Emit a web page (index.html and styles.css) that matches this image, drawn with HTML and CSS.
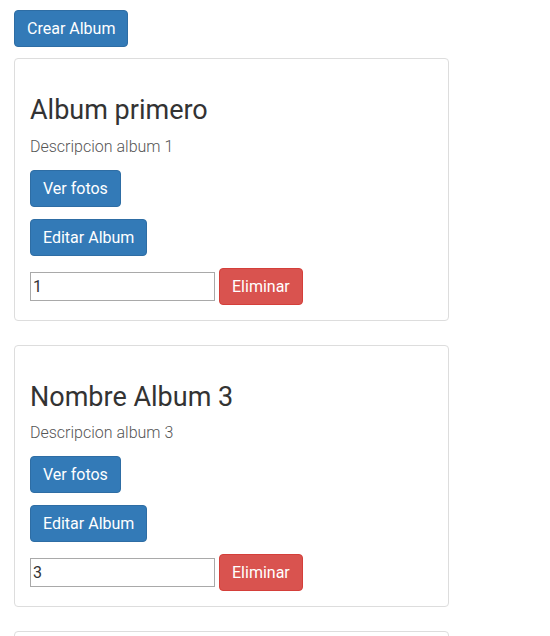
FILE: index.html
```html
<!DOCTYPE html>
<html lang="es">
<head>
<meta charset="utf-8">
<title>Albums</title>
<link rel="stylesheet" href="styles.css">
</head>
<body>
<div class="page">
  <button class="btn btn-primary crear">Crear Album</button>
  <div class="card">
    <h2 class="title">Album primero</h2>
    <p class="desc">Descripcion album 1</p>
    <div class="row"><button class="btn btn-primary">Ver fotos</button></div>
    <div class="row"><button class="btn btn-primary">Editar Album</button></div>
    <div class="row del"><input class="idbox" type="text" value="1"><button class="btn btn-danger">Eliminar</button></div>
  </div>
  <div class="card">
    <h2 class="title">Nombre Album 3</h2>
    <p class="desc">Descripcion album 3</p>
    <div class="row"><button class="btn btn-primary">Ver fotos</button></div>
    <div class="row"><button class="btn btn-primary">Editar Album</button></div>
    <div class="row del"><input class="idbox" type="text" value="3"><button class="btn btn-danger">Eliminar</button></div>
  </div>
  <div class="card">
    <h2 class="title">Album</h2>
    <p class="desc">Descripcion album</p>
  </div>
</div>
</body>
</html>
```

FILE: styles.css
```css
html, body {
  margin: 0;
  padding: 0;
  background: #fff;
}
body {
  font-family: Roboto, "Helvetica Neue", Arial, sans-serif;
  font-size: 16px;
  line-height: 1.42857;
  color: #333;
}
.page {
  padding: 10px 14px 0;
  width: 435px;
  display: flex;
  flex-direction: column;
  align-items: flex-start;
}
.btn {
  font-family: inherit;
  font-size: 16px;
  line-height: 23px;
  padding: 6px 12px;
  border: 1px solid transparent;
  border-radius: 4px;
  color: #fff;
  cursor: pointer;
  font-weight: 400;
}
.btn-primary {
  background: #337ab7;
  border-color: #2e6da4;
}
.btn-danger {
  background: #d9534f;
  border-color: #d43f3a;
}
.crear {
  margin-bottom: 11px;
}
.card {
  align-self: stretch;
  border: 1px solid #ddd;
  border-radius: 4px;
  padding: 15px;
  margin-bottom: 24px;
}
.title {
  font-size: 27px;
  font-weight: 400;
  line-height: 1.1;
  margin: 22px 0 10px;
  color: #333;
}
.desc {
  margin: 0 0 11px;
  color: #555;
  font-weight: 300;
}
.row {
  margin-bottom: 12px;
}
.row.del {
  margin-bottom: 0;
  display: flex;
  align-items: center;
  gap: 4px;
}
.idbox {
  box-sizing: border-box;
  width: 185px;
  height: 29px;
  border: 1px solid #a9a9a9;
  padding: 1px 2px;
  font-family: inherit;
  font-size: 16px;
  color: #333;
}
```
